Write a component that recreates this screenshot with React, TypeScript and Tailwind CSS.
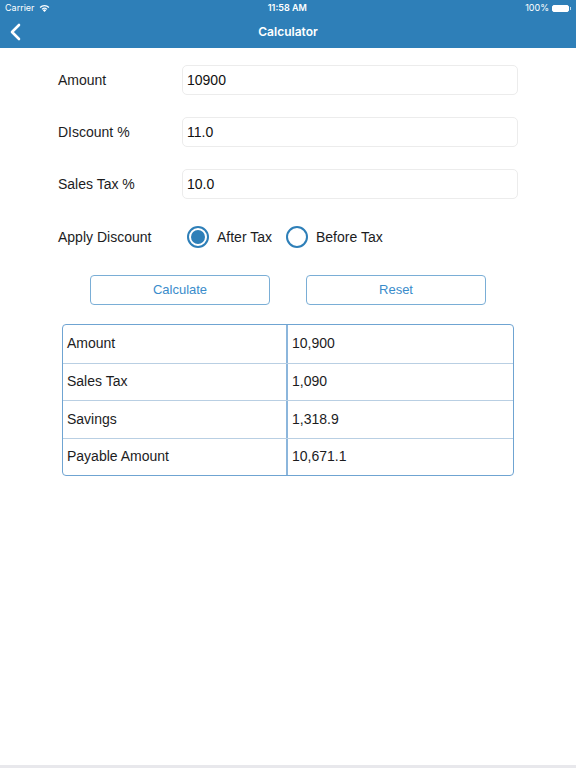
import React, { useState } from 'react'

const rows: [string, string][] = [
  ['Amount', '10,900'],
  ['Sales Tax', '1,090'],
  ['Savings', '1,318.9'],
  ['Payable Amount', '10,671.1'],
]

function Field({ label, value }: { label: string; value: string }) {
  return (
    <div className="flex h-[30px] items-center">
      <span className="w-[124px] text-[14px] text-[#1c1c1e]">{label}</span>
      <div className="flex h-[30px] w-[336px] items-center rounded-[5px] border border-[#ececec] px-[4px] text-[14px] text-[#111]">
        {value}
      </div>
    </div>
  )
}

function Radio({ checked, label }: { checked: boolean; label: string }) {
  return (
    <div className="flex items-center gap-[8px]">
      <span className="flex h-[22px] w-[22px] items-center justify-center rounded-full border-[2px] border-[#2e7fb8]">
        {checked && <span className="h-[14px] w-[14px] rounded-full bg-[#2e7fb8]" />}
      </span>
      <span className="text-[14px] text-[#1c1c1e]">{label}</span>
    </div>
  )
}

export default function App() {
  const [afterTax] = useState(true)

  return (
    <div className="relative flex h-[768px] w-[576px] flex-col bg-white font-['Liberation_Sans',Arial,sans-serif]">
      {/* status bar + navigation */}
      <div className="bg-[#2e7fb8] text-white">
        <div className="flex h-[16px] items-center justify-between px-[5px] font-['Inter',sans-serif] text-[9px]">
          <div className="flex items-center gap-[4px]">
            <span>Carrier</span>
            <svg width="11" height="8" viewBox="0 0 11 8" fill="white">
              <path d="M5.5 8 L3.8 6.2 A2.4 2.4 0 0 1 7.2 6.2 Z" />
              <path d="M2.6 5 A4.1 4.1 0 0 1 8.4 5 L7.6 5.8 A3 3 0 0 0 3.4 5.8 Z" />
              <path d="M0.6 3 A7 7 0 0 1 10.4 3 L9.5 3.9 A5.7 5.7 0 0 0 1.5 3.9 Z" />
            </svg>
          </div>
          <span className="font-semibold">11:58 AM</span>
          <div className="flex items-center gap-[3px]">
            <span>100%</span>
            <span className="flex items-center">
              <span className="h-[7px] w-[17px] rounded-[2px] border border-white bg-white" />
              <span className="ml-[1px] h-[3px] w-[1px] bg-white/70" />
            </span>
          </div>
        </div>
        <div className="relative flex h-[32px] items-center justify-center">
          <svg className="absolute left-[9px] top-[7px]" width="12" height="18" viewBox="0 0 12 18" fill="none">
            <path d="M10 2 L3 9 L10 16" stroke="white" strokeWidth="2.6" strokeLinecap="round" strokeLinejoin="round" />
          </svg>
          <span className="font-['Inter',sans-serif] text-[12px] font-semibold">Calculator</span>
        </div>
      </div>

      <div className="flex flex-col pl-[58px]">
        <div className="mt-[17px] flex flex-col gap-[22px]">
          <Field label="Amount" value="10900" />
          <Field label="DIscount %" value="11.0" />
          <Field label="Sales Tax %" value="10.0" />
        </div>

        <div className="mt-[23px] flex h-[30px] items-center">
          <span className="w-[129px] text-[14px] text-[#1c1c1e]">Apply Discount</span>
          <div className="flex items-center gap-[14px]">
            <Radio checked={afterTax} label="After Tax" />
            <Radio checked={!afterTax} label="Before Tax" />
          </div>
        </div>

        <div className="mt-[23px] flex gap-[36px] pl-[32px]">
          <button className="h-[30px] w-[180px] rounded-[4px] border border-[#7aaed6] text-[13px] text-[#3a8ccb]">
            Calculate
          </button>
          <button className="h-[30px] w-[180px] rounded-[4px] border border-[#7aaed6] text-[13px] text-[#3a8ccb]">
            Reset
          </button>
        </div>

        <div className="ml-[4px] mt-[19px] w-[452px] overflow-hidden rounded-[4px] border border-[#6fa4d2]">
          {rows.map(([k, v], i) => (
            <div
              key={k}
              className={`flex h-[37.5px] items-center text-[14px] text-[#1c1c1e] ${i > 0 ? 'border-t border-[#b9cfe3]' : ''}`}
            >
              <span className="flex h-full w-[225px] items-center border-r-[2px] border-[#8cb6dc] pl-[4px]">{k}</span>
              <span className="pl-[4px]">{v}</span>
            </div>
          ))}
        </div>
      </div>

      <div className="mt-auto h-[3px] bg-[#e8e8ec]" />
    </div>
  )
}
